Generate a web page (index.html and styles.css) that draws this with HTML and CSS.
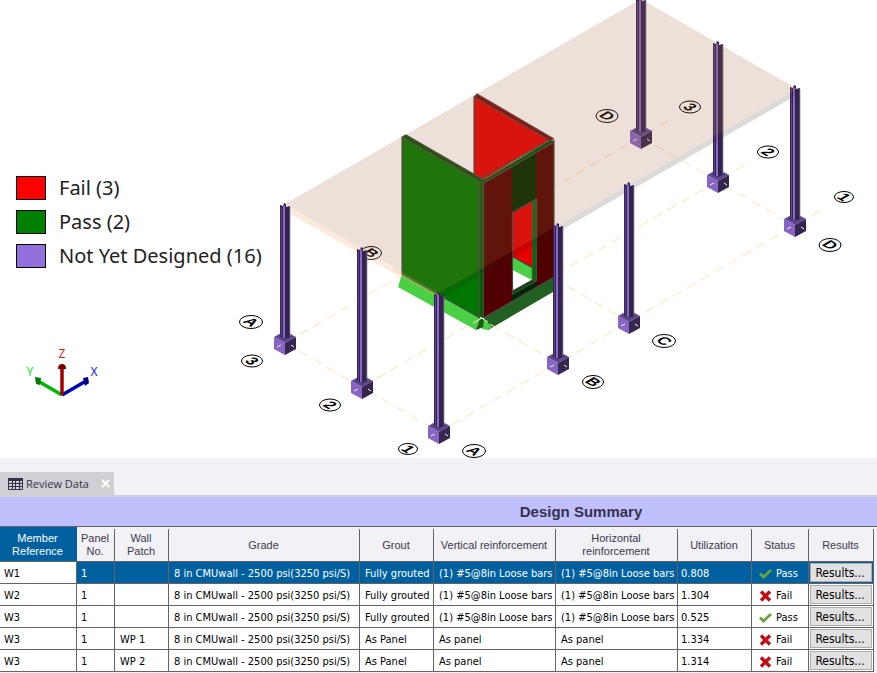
FILE: index.html
```
<!DOCTYPE html>
<html lang="en">
<head>
<meta charset="utf-8">
<title>Design Summary</title>
<link rel="stylesheet" href="styles.css">
</head>
<body>
<main class="scene">
  <svg class="model" viewBox="0 0 877 458" role="img" aria-label="Structural model">
    <defs>
      <g id="cube">
        <path fill="#5c468e" d="M-11-6L0-12 11-6 0 0z"/>
        <path fill="#8765c6" d="M-11-6L0 0V12L-11 6z"/>
        <path fill="#352650" d="M11-6L0 0V12L11 6z"/>
      </g>
      <g id="column">
        <path fill="#33244d" d="M-5-138l3 1 1-3 2 1v3l4-1V-6L0-4l-5-2z"/>
        <path fill="#5c458c" d="M-4-136h1V-6h-1z"/>
        <path fill="#8b67cb" d="M-2-138l2 1V-5h-2z"/>
        <path fill="#77708a" d="M4.500-136h.8V-7h-.8z"/>
      </g>
      <g id="post">
        <use href="#cube"/>
        <use href="#column"/>
        <path class="tick" d="M-8 4l4-2M6 2l3 2"/>
      </g>
    </defs>

    <g class="gridlines">
      <path d="M668 121L285 343"/>
      <path d="M745 165L362 387"/>
      <path d="M820 211L439 432"/>
      <path d="M285 343l154 89"/>
      <path d="M394 269l164 94"/>
      <path d="M553 278l76 44"/>
      <path d="M641 137l154 89"/>
    </g>

    <g class="bubbles">
      <ellipse cx="251" cy="322" rx="11.500" ry="6.500"/>
      <ellipse cx="252" cy="361" rx="10.500" ry="6"/>
      <ellipse cx="330" cy="405" rx="10.500" ry="6"/>
      <ellipse cx="408" cy="449" rx="9.500" ry="5.500"/>
      <ellipse cx="474" cy="451" rx="11.500" ry="6.500"/>
      <ellipse cx="371" cy="253" rx="10.500" ry="6.500"/>
      <ellipse cx="593" cy="382" rx="10.500" ry="6.500"/>
      <ellipse cx="664" cy="341" rx="11.500" ry="6.500"/>
      <ellipse cx="830" cy="245" rx="11" ry="6.500"/>
      <ellipse cx="607" cy="116" rx="11" ry="6.500"/>
      <ellipse cx="690" cy="107" rx="10.500" ry="6"/>
      <ellipse cx="768" cy="152" rx="10.500" ry="6"/>
      <ellipse cx="844" cy="197" rx="9.500" ry="5.500"/>
    </g>
    <g class="marks">
      <text transform="matrix(.866 .5 -.866 .5 251 322)" y="5">A</text>
      <text transform="matrix(.866 .5 -.866 .5 252 361)" y="5">3</text>
      <text transform="matrix(.866 .5 -.866 .5 330 405)" y="5">2</text>
      <text transform="matrix(.866 .5 -.866 .5 408 449)" y="5">1</text>
      <text transform="matrix(.866 .5 -.866 .5 474 451)" y="5">A</text>
      <text transform="matrix(.866 .5 -.866 .5 371 253)" y="5">B</text>
      <text transform="matrix(.866 .5 -.866 .5 593 382)" y="5">B</text>
      <text transform="matrix(.866 .5 -.866 .5 664 341)" y="5">C</text>
      <text transform="matrix(.866 .5 -.866 .5 830 245)" y="5">D</text>
      <text transform="matrix(.866 .5 -.866 .5 607 116)" y="5">D</text>
      <text transform="matrix(.866 .5 -.866 .5 690 107)" y="5">3</text>
      <text transform="matrix(.866 .5 -.866 .5 768 152)" y="5">2</text>
      <text transform="matrix(.866 .5 -.866 .5 844 197)" y="5">1</text>
    </g>

    <!-- footings -->
    <path fill="#4ad045" d="M402 274l-4 13 78 43 4-6 1-6z"/>
    <path fill="#226022" d="M484 318l69-41v15l-65 38z"/>
    <path fill="#4ad045" d="M483 319l5 11-6-1z"/>
    <path fill="#1c5a1c" d="M480 319l-4 11 5-2 3-1 1-8z"/>
    <path fill="#4ad045" d="M484 319l-1 9 4 2 5-3z"/>

    <!-- rear wall -->
    <path fill="#e80000" d="M474 97l75 43-66 40-9-5z"/>
    <path fill="#900000" d="M474 97l3-3 77 45-4 2z"/>
    <path class="edge" d="M474 175V97l3-3 77 45M474 97l75 43"/>

    <!-- left wall -->
    <path fill="#007800" d="M402 137l78 45v136l-78-44z"/>
    <path fill="#005200" d="M402 137l4-2 78 45-4 2z"/>
    <path class="edge" d="M402 274V137l4-2 78 45M402 137l78 45M402 274l78 44"/>

    <!-- front wall with opening -->
    <path fill="#500000" d="M483 182l71-42v137l-71 41z"/>
    <path fill="#002800" d="M512 165l24-14v136l-24 14z"/>
    <path fill="#e80000" d="M513 213l20-12v66l-20-10z"/>
    <path fill="#4ad045" d="M513 257l20 11v13l-20-11z"/>
    <path fill="#fff" d="M513 270l19 10-19 11z"/>
    <path fill="#006e00" d="M532 202l4-2v81l-4-1z"/>
    <path fill="#004800" d="M513 291l19-11 4 1-23 13z"/>
    <path class="edge" d="M512.500 294v-82l24-13v82zM532.500 202v78l-20 11M513 257l20 11M532.500 280l4 1"/>
    <path fill="#005200" d="M480 182l70-42 4 1-70 42z"/>
    <path fill="#006000" d="M480 182h4v136h-4z"/>
    <path class="edge" d="M479.500 181v137M483.500 182v136M480 179l70-39M484 183l70-41M554 140v137l-70 41"/>

    <use href="#post" x="641" y="137"/>
    <use href="#post" x="718" y="181"/>
    <use href="#post" x="795" y="225"/>

    <!-- slab -->
    <path fill="#a0643c" fill-opacity=".2" d="M285 204L641-1l156 90-358 204z"/>
    <path fill="#281e14" fill-opacity=".16" d="M439 293L797 89v6L439 300z"/>
    <path fill="#f0a060" fill-opacity=".22" d="M285 204l154 89v6l-154-88z"/>

    <use href="#post" x="629" y="322"/>
    <use href="#post" x="558" y="363"/>
    <use href="#post" x="285" y="343"/>
    <use href="#post" x="362" y="387"/>
    <use href="#post" x="439" y="432"/>
    <path class="tick" d="M473 323l9-5M480 317l8 5M490 324l5 3"/>

    <!-- axes -->
    <g stroke-width="3.500" fill="none">
      <path stroke="#00b800" d="M62 395L38 381"/>
      <path stroke="#0000b4" d="M62 395l24-14"/>
      <path stroke="#a00000" d="M62 395v-28"/>
    </g>
    <path fill="#007a00" d="M41 378l-6-1 1 7 4 1z"/>
    <path fill="#00008c" d="M83 378l5-1 1 6-4 3z"/>
    <path fill="#780000" d="M58 369q0-5 4-5t4 5z"/>
    <g class="axis-names">
      <text x="62" y="358" fill="#f01818">Z</text>
      <text x="94" y="376" fill="#1818f0">X</text>
      <text x="30" y="376" fill="#18e018">Y</text>
    </g>
  </svg>
  <ul class="legend">
    <li><span class="swatch fail"></span>Fail (3)</li>
    <li><span class="swatch pass"></span>Pass (2)</li>
    <li><span class="swatch pending"></span>Not Yet Designed (16)</li>
  </ul>
</main>

<section class="panel">
  <div class="tabs">
    <div class="tab">
      <svg class="grid-icon" width="15" height="12" viewBox="0 0 15 12" aria-hidden="true">
        <path fill="#35324a" d="M0 0h15v3H0z"/>
        <path fill="none" stroke="#35324a" d="M.5.500v11h14V.500M0 5.500h15M0 8.500h15M4.500 3v9M7.500 3v9M11.500 3v9"/>
      </svg>
      <span>Review Data</span>
      <button class="close" aria-label="Close"><svg width="9" height="9" viewBox="0 0 9 9"><path d="M1 1l7 7M8 1L1 8" stroke="#fff" stroke-width="2"/></svg></button>
    </div>
  </div>
  <h1 class="title">Design Summary</h1>
  <svg class="sprites" aria-hidden="true">
    <symbol id="ok" viewBox="0 0 13 12"><path fill="none" stroke="#6aa53c" stroke-width="2.800" d="M1 5.500l3.500 3.500L12 2"/></symbol>
    <symbol id="bad" viewBox="0 0 13 12"><path fill="none" stroke="#c00c14" stroke-width="3.400" d="M2 1.500l9 9M11 1.500l-9 9"/></symbol>
  </svg>
  <div class="table-wrap">
  <table>
    <colgroup><col class="c-member"><col class="c-panel"><col class="c-patch"><col><col class="c-grout"><col class="c-bars"><col class="c-bars"><col class="c-util"><col class="c-status"><col class="c-results"></colgroup>
    <thead>
      <tr><th class="active">Member Reference</th><th>Panel No.</th><th>Wall Patch</th><th>Grade</th><th>Grout</th><th>Vertical reinforcement</th><th>Horizontal reinforcement</th><th>Utilization</th><th>Status</th><th>Results</th></tr>
    </thead>
    <tbody>
      <tr class="selected"><td>W1</td><td>1</td><td></td><td>8 in CMUwall - 2500 psi(3250 psi/S)</td><td>Fully grouted</td><td>(1) #5@8in Loose bars</td><td>(1) #5@8in Loose bars</td><td>0.808</td><td><span class="status"><svg><use href="#ok"/></svg>Pass</span></td><td><button class="results">Results...</button></td></tr>
      <tr><td>W2</td><td>1</td><td></td><td>8 in CMUwall - 2500 psi(3250 psi/S)</td><td>Fully grouted</td><td>(1) #5@8in Loose bars</td><td>(1) #5@8in Loose bars</td><td>1.304</td><td><span class="status"><svg><use href="#bad"/></svg>Fail</span></td><td><button class="results">Results...</button></td></tr>
      <tr><td>W3</td><td>1</td><td></td><td>8 in CMUwall - 2500 psi(3250 psi/S)</td><td>Fully grouted</td><td>(1) #5@8in Loose bars</td><td>(1) #5@8in Loose bars</td><td>0.525</td><td><span class="status"><svg><use href="#ok"/></svg>Pass</span></td><td><button class="results">Results...</button></td></tr>
      <tr><td>W3</td><td>1</td><td>WP 1</td><td>8 in CMUwall - 2500 psi(3250 psi/S)</td><td>As Panel</td><td>As panel</td><td>As panel</td><td>1.334</td><td><span class="status"><svg><use href="#bad"/></svg>Fail</span></td><td><button class="results">Results...</button></td></tr>
      <tr><td>W3</td><td>1</td><td>WP 2</td><td>8 in CMUwall - 2500 psi(3250 psi/S)</td><td>As Panel</td><td>As panel</td><td>As panel</td><td>1.314</td><td><span class="status"><svg><use href="#bad"/></svg>Fail</span></td><td><button class="results">Results...</button></td></tr>
    </tbody>
  </table>
  </div>
</section>
</body>
</html>
```
FILE: styles.css
```
* { box-sizing: border-box; }

body {
  margin: 0;
  background: #f2f1f6;
  color: #000;
  font-family: "DejaVu Sans Condensed", "Liberation Sans", sans-serif;
  font-size: 11px;
}

.scene { position: relative; background: #fff; }
.model { display: block; width: 100%; height: auto; }
.gridlines path { fill: none; stroke: #fde8c8; stroke-width: 1.2; stroke-dasharray: 10 6; }
.bubbles ellipse { fill: none; stroke: #000; stroke-width: 1; }
.marks text { font: bold 15px "Liberation Sans", sans-serif; text-anchor: middle; }
.edge { fill: none; stroke: #484848; stroke-width: 1.2; }
.tick { fill: none; stroke: #fff0d8; stroke-width: 1; }
.axis-names text { font: 12px "Noto Sans", sans-serif; text-anchor: middle; }

.legend {
  position: absolute;
  top: 176px;
  left: 16px;
  display: grid;
  gap: 10px;
  margin: 0;
  padding: 0;
  list-style: none;
  color: #222;
  font: 20px/24px "Noto Sans", sans-serif;
}
.legend li { display: flex; align-items: center; gap: 13px; }
.swatch { width: 30px; height: 24px; border: 1px solid #000; }
.fail { background: #f00; }
.pass { background: #008000; }
.pending { background: #9370db; }

.tabs { padding-top: 14px; border-bottom: 2px solid #d0d0d4; }
.tab {
  display: flex;
  align-items: center;
  gap: 3px;
  width: 114px;
  height: 23px;
  padding: 0 4px 0 8px;
  background: #d0d0d4;
  color: #35324a;
  font: 11px "Open Sans", sans-serif;
  white-space: nowrap;
}
.close { display: flex; margin-left: auto; padding: 0; border: 0; background: none; }

.title {
  margin: 0;
  padding-left: 285px;
  background: #c0c0ff;
  border-bottom: 1px solid #646464;
  color: #35324a;
  font: bold 15px/29px "Liberation Sans", sans-serif;
  text-align: center;
}

.sprites { position: absolute; width: 0; height: 0; }
.table-wrap { padding-right: 3px; }
table { width: 100%; table-layout: fixed; border-spacing: 0; }
.c-member { width: 77px; }
.c-panel { width: 38px; }
.c-patch { width: 54px; }
.c-grout { width: 74px; }
.c-bars { width: 122px; }
.c-util { width: 74px; }
.c-status { width: 57px; }
.c-results { width: 65px; }

th {
  height: 35px;
  padding: 2px 4px 0 2px;
  border-bottom: 1px solid #646464;
  background: linear-gradient(#646464, #646464) right bottom / 1px calc(100% - 2px) no-repeat;
  color: #3c3a4c;
  font: 11px/13px "Liberation Sans", sans-serif;
}
th.active { background: #0060a0; color: #fff; }
td {
  height: 22px;
  padding: 2px 0 0 5px;
  border-right: 1px solid #646464;
  border-bottom: 1px solid #646464;
  background: #fff;
  line-height: 14px;
  white-space: nowrap;
}
td:first-child, td:nth-child(2) { padding-left: 4px; }
td:nth-child(8) { padding-left: 3px; }
td:last-child { padding: 1px; }
.selected td:not(:first-child) { background: #0060a0; color: #fff; }
.status { display: flex; align-items: center; gap: 4px; padding-left: 2px; }
.status svg { width: 13px; height: 12px; }
.results {
  display: block;
  width: 100%;
  height: 19px;
  padding: 2px 2px 0 0;
  border: 1px solid #adadad;
  background: #e1e1e1;
  color: #000;
  font: 12px/15px "DejaVu Sans Condensed", sans-serif;
}
```
